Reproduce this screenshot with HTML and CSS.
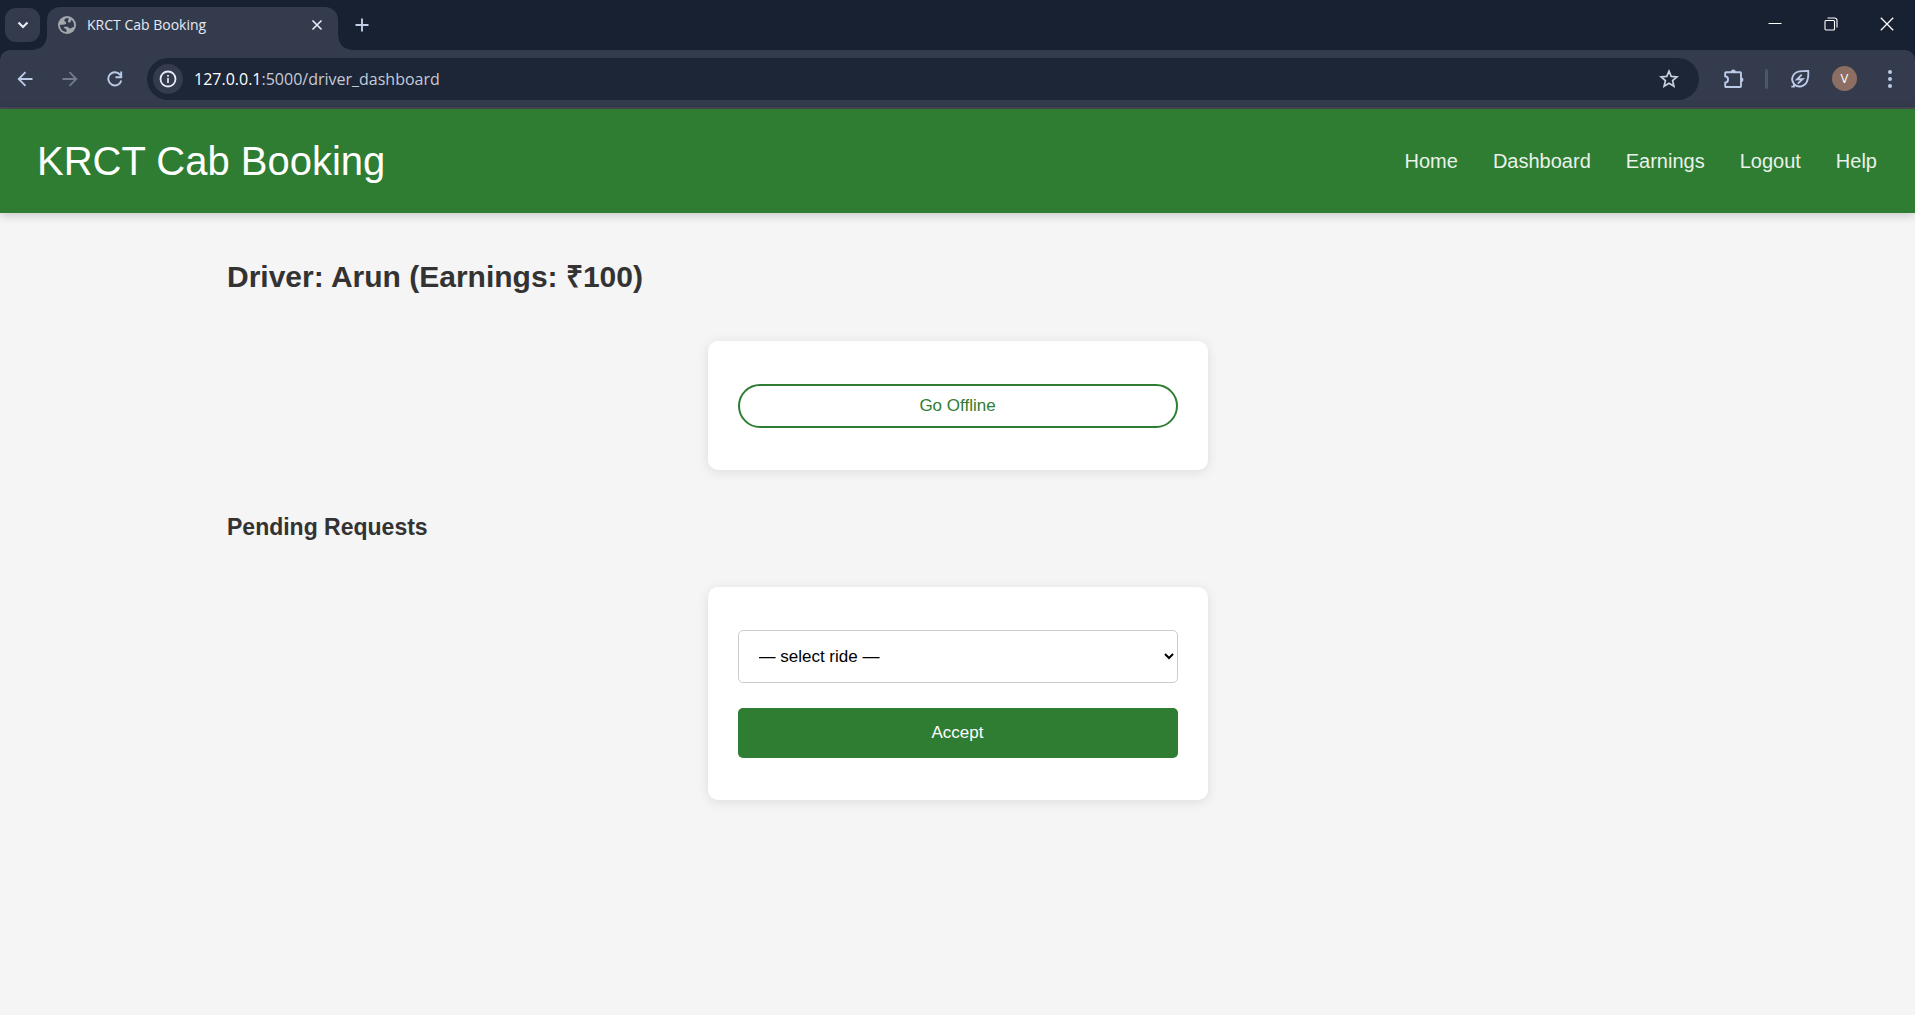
FILE: index.html
```html
<!DOCTYPE html>
<html lang="en">
<head>
<meta charset="utf-8">
<title>KRCT Cab Booking</title>
<link rel="stylesheet" href="styles.css">
</head>
<body>
<div class="browser">
  <div class="tab-strip">
    <button class="tab-search" aria-label="Search tabs"><svg width="12" height="8" viewBox="0 0 12 8"><path d="M1.500 1.500 6 6l4.500-4.500" stroke="#e6eaf4" stroke-width="2.200"/></svg></button>
    <div class="tab">
      <svg width="18" height="18" viewBox="0 0 18 18"><circle cx="9" cy="9" r="9" fill="#a4a8ad"/><path d="M9.800 2C7.600 2 6.300 3 6.300 4.500c0 1.300 1.900 1 1.900 2.300 0 1.400-1.400 1.900-3.200 1.900H2C1.700 12.500 4.700 15.800 8.500 16v-2c0-1.400-2.700-1-2.700-3.200h3.400c1.700 0 1.300 1.800 2.800 1.800 1.400 0 1.800-1.400 3.900-1.500.6-2.700-.2-5.200-2-7-.7.100-1.200.6-1.200 1.400 0 1.500-2.800 1.300-2.800-.2 0-1.200.9-1.500.9-2.600z" fill="#333b4d"/></svg>
      <span class="tab-title">KRCT Cab Booking</span>
      <button class="tab-close" aria-label="Close tab"><svg width="12" height="12" viewBox="0 0 12 12"><path d="m1.500 1.500 9 9m0-9-9 9" stroke="#e6eaf4" stroke-width="1.700"/></svg></button>
    </div>
    <button class="new-tab" aria-label="New tab"><svg width="14" height="14" viewBox="0 0 14 14"><path d="M7 .5v13M.5 7h13" stroke="#c3cee6" stroke-width="1.900"/></svg></button>
    <div class="window-controls">
      <button aria-label="Minimize"><svg width="14" height="14" viewBox="0 0 14 14"><path d="M.5 6.500h13" stroke="#fff"/></svg></button>
      <button aria-label="Restore"><svg width="14" height="14" viewBox="0 0 14 14"><rect x="1" y="3.500" width="9.500" height="9.500" rx="1" stroke="#fff" stroke-width="1.100"/><path d="M3.500 1h7a2.500 2.500 0 0 1 2.500 2.500v7" stroke="#fff" stroke-width="1.100"/></svg></button>
      <button aria-label="Close"><svg width="14" height="14" viewBox="0 0 14 14"><path d="m.8.8 12.400 12.400m0-12.400L.8 13.200" stroke="#fff" stroke-width="1.300"/></svg></button>
    </div>
  </div>
  <div class="toolbar">
    <button class="tool" aria-label="Back"><svg width="16" height="16" viewBox="0 0 16 16"><path d="M15.500 8H2M8.500 1.200 1.700 8l6.800 6.800" stroke="#bccae6" stroke-width="1.800"/></svg></button>
    <button class="tool" aria-label="Forward"><svg width="16" height="16" viewBox="0 0 16 16"><path d="M.5 8H14M7.500 1.200 14.300 8l-6.800 6.800" stroke="#747c8b" stroke-width="1.800"/></svg></button>
    <button class="tool" aria-label="Reload"><svg width="16" height="16" viewBox="0 0 16 16"><path d="M14.300 9.500A6.600 6.600 0 1 1 13.400 4.200M14.200.5v5.700H8.500" stroke="#bccae6" stroke-width="1.900"/></svg></button>
    <div class="omnibox">
      <button class="site-info" aria-label="View site information"><svg width="18" height="18" viewBox="0 0 18 18"><circle cx="9" cy="9" r="7.500" stroke="#e6eaf4" stroke-width="1.800"/><path d="M9 8v5M9 5v1.700" stroke="#e6eaf4" stroke-width="1.700"/></svg></button>
      <div class="address" role="textbox" aria-label="Address"><span class="host">127.0.0.1</span>:5000/driver_dashboard</div>
      <button class="bookmark" aria-label="Bookmark this tab"><svg width="20" height="20" viewBox="0 0 20 20"><path d="m10 2.200 2.200 5.200 5.700.5-4.300 3.700 1.300 5.600L10 14.200l-4.900 3 1.300-5.600-4.300-3.700 5.700-.5z" stroke="#c9cfdc" stroke-width="1.700"/></svg></button>
    </div>
    <button class="tool" aria-label="Extensions"><svg width="22" height="22" viewBox="0 0 22 22"><path d="M3 4.200h14.200c.4 0 .8.400.8.800v13.200c0 .4-.4.800-.8.800H3c-.4 0-.8-.4-.8-.8v-3.500c3.800-.4 3.800-6 0-6.400V5c0-.4.400-.8.800-.8z" stroke="#bccae6" stroke-width="1.900"/><path d="M7.800 4a2.500 2.500 0 0 1 5 0zM18 9.200a2.500 2.500 0 0 1 0 5z" fill="#bccae6"/></svg></button>
    <span class="divider"></span>
    <button class="tool" aria-label="Energy saver"><svg width="20" height="20" viewBox="0 0 20 20"><path d="M4.300 15.300C-.2 10.500 3 3.600 9.500 2.400c2.700-.5 5.300-.5 8.700-.5.3 3.400.2 6.200-.7 9.100-1.700 6-8.700 8.700-13.200 4.300zM3.900 15v2.600H1.300" stroke="#bccae6" stroke-width="1.900"/><path d="M11.700 5.700 7 10.500l5.700-.5-4.900 4.700" stroke="#bccae6" stroke-width="1.800"/></svg></button>
    <button class="tool" aria-label="Profile"><span class="avatar">V</span></button>
    <button class="tool" aria-label="Menu"><svg width="6" height="20" viewBox="0 0 6 20"><g fill="#bccae6"><circle cx="3" cy="3" r="2"/><circle cx="3" cy="10" r="2"/><circle cx="3" cy="17" r="2"/></g></svg></button>
  </div>
</div>
<header class="site-header">
  <div class="logo">KRCT Cab Booking</div>
  <nav class="site-nav">
    <a href="#">Home</a>
    <a href="#">Dashboard</a>
    <a href="#">Earnings</a>
    <a href="#">Logout</a>
    <a href="#">Help</a>
  </nav>
</header>
<main class="container">
  <h2>Driver: Arun (Earnings: ₹100)</h2>
  <form class="card">
    <button type="button" class="btn-outline">Go Offline</button>
  </form>
  <h3>Pending Requests</h3>
  <form class="card">
    <select class="ride-select" aria-label="Ride">
      <option>— select ride —</option>
    </select>
    <button type="button" class="btn-primary">Accept</button>
  </form>
</main>
</body>
</html>
```
FILE: styles.css
```css
* {
  box-sizing: border-box;
}

body {
  margin: 0;
  background: #f5f5f5;
  color: #333;
  font-family: "Liberation Sans", Arial, sans-serif;
}

button {
  font: inherit;
  cursor: pointer;
}

svg {
  display: block;
  flex: none;
  fill: none;
}

/* Browser frame */
.browser {
  background: #182131;
  border-bottom: 2px solid #474853;
  font-family: "Open Sans", "Noto Sans", sans-serif;
}

.browser button {
  display: flex;
  align-items: center;
  justify-content: center;
  padding: 0;
  border: 0;
  background: none;
}

.tab-strip {
  display: flex;
  height: 50px;
  padding-left: 5px;
}

.browser .tab-search {
  width: 35px;
  height: 34px;
  margin-top: 8px;
  border-radius: 11px;
  background: #333b4d;
}

.tab {
  position: relative;
  display: flex;
  align-items: center;
  gap: 11px;
  width: 291px;
  height: 43px;
  margin: 7px 0 0 7px;
  padding: 0 10px 7px 11px;
  border-radius: 13px 13px 0 0;
  background: #333b4d;
}

/* Curved feet that join the tab to the toolbar */
.tab::before,
.tab::after {
  content: "";
  position: absolute;
  bottom: 0;
  width: 13px;
  height: 13px;
}

.tab::before {
  right: 100%;
  background: radial-gradient(circle at 0 0, transparent 12px, #333b4d 13px);
}

.tab::after {
  left: 100%;
  background: radial-gradient(circle at 100% 0, transparent 12px, #333b4d 13px);
}

.tab-title {
  flex: 1;
  color: #e6eaf4;
  font-size: 14px;
  line-height: 20px;
}

.tab-close {
  width: 22px;
  height: 22px;
}

.browser .new-tab {
  width: 34px;
  height: 34px;
  margin: 8px 0 0 7px;
}

.window-controls {
  display: flex;
  margin-left: auto;
}

.window-controls button {
  width: 56px;
  height: 48px;
}

.toolbar {
  display: flex;
  align-items: center;
  height: 57px;
  padding: 0 3px 0 2px;
  border-radius: 10px 10px 0 0;
  background: #333b4d;
}

.tool {
  width: 45px;
  height: 44px;
}

.omnibox {
  display: flex;
  flex: 1;
  align-items: center;
  height: 42px;
  margin: 0 12px 0 10px;
  padding: 0 16px 0 6px;
  border-radius: 21px;
  background: #1d2636;
}

.browser .site-info {
  width: 30px;
  height: 30px;
  border-radius: 50%;
  background: #333b4d;
}

.address {
  flex: 1;
  margin-left: 11px;
  color: #c5cbd8;
  font-size: 16px;
  line-height: 24px;
}

.host {
  color: #fff;
}

.bookmark {
  width: 28px;
  height: 28px;
}

.divider {
  width: 3px;
  height: 20px;
  margin: 0 9px;
  border-radius: 2px;
  background: #4b556b;
}

.avatar {
  width: 25px;
  height: 25px;
  border-radius: 50%;
  background: #8d6e63;
  color: #fff;
  font-size: 13px;
  line-height: 25px;
}

/* Site */
.site-header {
  display: flex;
  align-items: center;
  justify-content: space-between;
  padding: 29px 38px 29px 37px;
  background: #2e7d32;
  color: #fff;
  box-shadow: 0 2px 10px rgba(0, 0, 0, 0.2);
}

.logo {
  font-size: 40px;
  line-height: 46px;
}

.site-nav {
  display: flex;
  gap: 35px;
}

.site-nav a {
  color: #fff;
  font-size: 20px;
  line-height: 24px;
  text-decoration: none;
  opacity: 0.9;
}

.container {
  max-width: 1461px;
  margin: 0 auto;
  padding: 46px 0;
}

h2,
h3 {
  margin: 0;
}

h2 {
  font-size: 30px;
  line-height: 36px;
}

h3 {
  font-size: 23px;
  line-height: 28px;
}

.card {
  display: flex;
  flex-direction: column;
  gap: 25px;
  max-width: 500px;
  margin: 46px auto 43px;
  padding: 43px 30px 42px;
  border-radius: 10px;
  background: #fff;
  box-shadow: 0 2px 12px rgba(0, 0, 0, 0.1);
  font-size: 17px;
}

.btn-outline {
  height: 44px;
  border: 2px solid #2e7d32;
  border-radius: 22px;
  background: transparent;
  color: #2e7d32;
}

.ride-select {
  height: 53px;
  padding: 0 0 0 16px;
  border: 1px solid #ccc;
  border-radius: 5px;
  background: #fff;
  color: #000;
  font: inherit;
}

.btn-primary {
  height: 50px;
  border: 0;
  border-radius: 5px;
  background: #2e7d32;
  color: #fff;
}
```
